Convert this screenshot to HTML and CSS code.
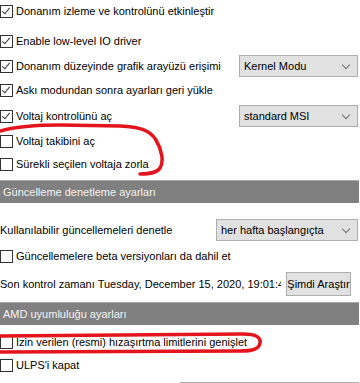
FILE: index.html
```html
<!DOCTYPE html>
<html>
<head>
<meta charset="utf-8">
<link rel="stylesheet" href="styles.css">
</head>
<body>
<div class="page">
  <div class="row r1"><span class="cb on"></span><span class="lbl">Donanım izleme ve kontrolünü etkinleştir</span></div>
  <div class="row r2"><span class="cb on"></span><span class="lbl">Enable low-level IO driver</span></div>
  <div class="row r3"><span class="cb on"></span><span class="lbl">Donanım düzeyinde grafik arayüzü erişimi</span><span class="combo w119">Kernel Modu</span></div>
  <div class="row r4"><span class="cb on"></span><span class="lbl">Askı modundan sonra ayarları geri yükle</span></div>
  <div class="row r5"><span class="cb on"></span><span class="lbl">Voltaj kontrolünü aç</span><span class="combo w119">standard MSI</span></div>
  <div class="row r6"><span class="cb"></span><span class="lbl">Voltaj takibini aç</span></div>
  <div class="row r7"><span class="cb"></span><span class="lbl">Sürekli seçilen voltaja zorla</span></div>
  <div class="section s1">Güncelleme denetleme ayarları</div>
  <div class="row r8"><span class="lbl plain">Kullanılabilir güncellemeleri denetle</span><span class="combo w142">her hafta başlangıçta</span></div>
  <div class="row r9"><span class="cb"></span><span class="lbl">Güncellemelere beta versiyonları da dahil et</span></div>
  <div class="row r10"><span class="lbl plain clip">Son kontrol zamanı Tuesday, December 15, 2020, 19:01:42</span><span class="btn">Şimdi Araştır</span></div>
  <div class="section s2">AMD uyumluluğu ayarları</div>
  <div class="row r11"><span class="cb"></span><span class="lbl">İzin verilen (resmi) hızaşırtma limitlerini genişlet</span></div>
  <div class="row r12"><span class="cb"></span><span class="lbl">ULPS'i kapat</span></div>
  <div class="row r13"><span class="partial"></span></div>

  <svg class="marks" width="360" height="383" viewBox="0 0 360 383">
    <path d="M0,131 C15,127 30,125 60,125 L120,126 C140,127 150,130 156,140 C162,150 164,162 160,168 C157,173 150,174 140,174" />
    <path d="M0,336 L243,334 C257,334 261,338 260,343 C259,349 253,351 240,351 L0,352" />
  </svg>
</div>
</body>
</html>
```
FILE: styles.css
```css
html, body {
  margin: 0;
  padding: 0;
  background: #ffffff;
}
.page {
  position: relative;
  width: 360px;
  height: 383px;
  overflow: hidden;
  font-family: "Liberation Sans", Arial, sans-serif;
  font-size: 11px;
  color: #000;
  display: flex;
  flex-direction: column;
}
.row {
  display: flex;
  align-items: center;
  height: 22px;
  flex: none;
}
.r1 { margin-top: 0; }
.r2 { margin-top: 8px; }
.r3 { margin-top: 3px; }
.r4 { margin-top: 2px; }
.r5 { margin-top: 4px; }
.r6 { margin-top: 3px; }
.r7 { margin-top: 1px; }
.section {
  flex: none;
  margin-top: 5px;
  height: 22px;
  line-height: 22px;
  background: #808080;
  border-top: 1px solid #a8a8a8;
  color: #f4f4f4;
  padding-left: 3px;
  margin-right: 1px;
}
.r8 { margin-top: 16px; }
.r9 { margin-top: 4px; }
.r10 { margin-top: 5px; height: 24px; }
.s2 { margin-top: 6px; }
.r11 { margin-top: 6px; }
.r12 { margin-top: 1px; }
.r13 { margin-top: 4px; }
.cb {
  flex: none;
  width: 11px;
  height: 11px;
  border: 1px solid #333;
  background: #fff;
  margin-right: 3px;
  position: relative;
}
.cb.on::after {
  content: "";
  position: absolute;
  left: 3px;
  top: 0px;
  width: 3px;
  height: 7px;
  border-right: 1px solid #333;
  border-bottom: 1px solid #333;
  transform: rotate(40deg);
}
.lbl {
  white-space: nowrap;
  flex: 1 1 auto;
  overflow: hidden;
}
.combo {
  flex: none;
  box-sizing: border-box;
  height: 22px;
  background: #e1e1e1;
  border: 1px solid #adadad;
  margin-right: 2px;
  padding-left: 4px;
  display: flex;
  align-items: center;
  position: relative;
  white-space: nowrap;
}
.combo::after {
  content: "";
  position: absolute;
  right: 8px;
  top: 6px;
  width: 5px;
  height: 5px;
  border-right: 1px solid #707070;
  border-bottom: 1px solid #707070;
  transform: rotate(45deg);
}
.w119 { width: 119px; }
.w142 { width: 142px; }
.clip {
  flex: none;
  width: 281px;
}
.btn {
  flex: none;
  box-sizing: border-box;
  margin-left: 5px;
  width: 65px;
  height: 24px;
  background: #e1e1e1;
  border: 1px solid #adadad;
  display: flex;
  align-items: center;
  justify-content: center;
  white-space: nowrap;
}
.partial {
  margin-left: 180px;
  width: 179px;
  height: 20px;
  border-top: 1px solid #adadad;
  align-self: flex-start;
  margin-top: 2px;
}
.marks {
  position: absolute;
  left: 0;
  top: 0;
  pointer-events: none;
}
.marks path {
  fill: none;
  stroke: #e3141b;
  stroke-width: 3.5;
  stroke-linecap: round;
  stroke-linejoin: round;
}
```
